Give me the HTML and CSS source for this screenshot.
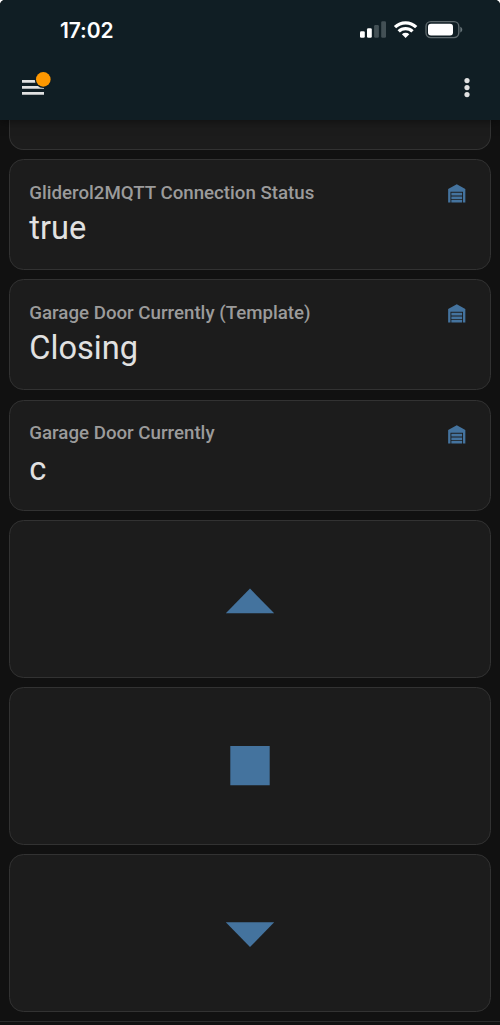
FILE: index.html
```html
<!DOCTYPE html>
<html lang="en">
<head>
<meta charset="utf-8">
<meta name="viewport" content="width=device-width, initial-scale=1">
<title>Garage Door</title>
<link rel="stylesheet" href="styles.css">
</head>
<body>
<div class="phone">
  <header class="header">
    <div class="status-bar">
      <span class="clock">17:02</span>
      <svg class="status-icons" width="104" height="20" viewBox="0 0 104 20">
        <g fill="#fff">
          <rect x="0" y="11.2" width="4.8" height="6.6" rx="1.3"/>
          <rect x="7" y="8.3" width="4.8" height="9.5" rx="1.3"/>
          <g fill="#435055">
            <rect x="14.1" y="5" width="4.8" height="12.8" rx="1.3"/>
            <rect x="21.2" y="1.2" width="4.8" height="16.6" rx="1.3"/>
          </g>
        </g>
        <g fill="none" stroke="#fff" stroke-width="3.3">
          <path d="M35 7.1a15.3 15.3 0 0 1 21.2 0"/>
          <path d="M38.7 11.4a10 10 0 0 1 13.8 0"/>
        </g>
        <path d="M45.6 17.9l-3.7-3.7a5.4 5.4 0 0 1 7.4 0z" fill="#fff"/>
        <rect x="66" y="1.6" width="32.8" height="16" rx="4.8" fill="none" stroke="#5d686c" stroke-width="1.4"/>
        <rect x="68" y="3.7" width="25" height="11.8" rx="3" fill="#fff"/>
        <path d="M100.3 6.8c2.6.9 2.6 4.7 0 5.6z" fill="#68757a"/>
      </svg>
    </div>
    <div class="toolbar">
      <svg class="menu" width="32" height="28" viewBox="0 0 32 28">
        <path d="M1 10.4h22M1 16.4h22M1 22.4h22" stroke="#e1e1e1" stroke-width="2.6"/>
        <circle cx="22.3" cy="8.4" r="8.6" fill="#101e24"/>
        <circle cx="22.3" cy="8.4" r="7.3" fill="#ff9800"/>
      </svg>
      <svg class="more" width="8" height="22" viewBox="0 0 8 22" fill="#e1e1e1">
        <circle cx="4" cy="3.6" r="2.6"/>
        <circle cx="4" cy="10.6" r="2.6"/>
        <circle cx="4" cy="17.6" r="2.6"/>
      </svg>
    </div>
  </header>
  <svg class="defs" width="0" height="0">
    <symbol id="garage" viewBox="0 0 24 24">
      <path d="M19 20H17.1V11.2H6.9V20H5V9L12 5L19 9V20M7.6 12H16.4V14.3H7.6V12M7.6 15H16.4V17.2H7.6V15M16.4 17.9V20H7.6V17.9H16.4Z"/>
    </symbol>
  </svg>
  <main class="cards">
    <section class="card card-clipped"></section>
    <section class="card entity">
      <div class="entity-text">
        <div class="name">Gliderol2MQTT Connection Status</div>
        <div class="value">true</div>
      </div>
      <svg class="entity-icon"><use href="#garage"/></svg>
    </section>
    <section class="card entity">
      <div class="entity-text">
        <div class="name">Garage Door Currently (Template)</div>
        <div class="value">Closing</div>
      </div>
      <svg class="entity-icon"><use href="#garage"/></svg>
    </section>
    <section class="card entity">
      <div class="entity-text">
        <div class="name">Garage Door Currently</div>
        <div class="value">c</div>
      </div>
      <svg class="entity-icon"><use href="#garage"/></svg>
    </section>
    <section class="card control">
      <svg width="50" height="40" viewBox="0 0 50 40"><path d="M.8 34.3L25 9.6L49.2 34.3z"/></svg>
    </section>
    <section class="card control">
      <svg width="50" height="40" viewBox="0 0 50 40"><path d="M5.3 0h39.4v39.2H5.3z"/></svg>
    </section>
    <section class="card control">
      <svg width="50" height="40" viewBox="0 0 50 40"><path d="M.8 9.3h48.4L25 34z"/></svg>
    </section>
  </main>
  <footer class="bottom"></footer>
</div>
</body>
</html>
```
FILE: styles.css
```css
* { box-sizing: border-box; }

body {
  margin: 0;
  background: #fff;
  font-family: Roboto, "Liberation Sans", sans-serif;
}

.phone {
  display: flex;
  flex-direction: column;
  width: 500px;
  height: 1025px;
  overflow: hidden;
  border-radius: 5px 5px 0 0;
  background: #111;
}

.header {
  position: relative;
  z-index: 1;
  flex: none;
  height: 120px;
  background: #101e24;
  box-shadow: 0 1px 10px rgba(0, 0, 0, .5);
}

.status-bar {
  display: flex;
  justify-content: space-between;
  align-items: center;
  height: 60px;
  padding: 0 36px 0 60px;
}

.clock {
  padding-top: 1px;
  color: #fff;
  font: 600 21px/24px Inter, sans-serif;
  letter-spacing: -.1px;
}

.toolbar {
  display: flex;
  justify-content: space-between;
  align-items: flex-start;
  height: 60px;
  padding: 11px 29px 0 21px;
}

.more { margin-top: 6px; }

.defs { display: none; }

.cards {
  flex: none;
  display: flex;
  flex-direction: column;
  gap: 9.3px;
  height: 901px;
  padding: 0 9.3px;
}

.card {
  flex: none;
  border: 1.3px solid #323232;
  border-radius: 14.5px;
  background: #1c1c1c;
}

.card-clipped {
  height: 29.8px;
  border-top: 0;
  border-top-left-radius: 0;
  border-top-right-radius: 0;
}

.entity {
  display: flex;
  justify-content: space-between;
  height: 111px;
  padding: 18px 18.2px 0 19px;
}

.name {
  margin-top: 2.8px;
  color: #9b9b9b;
  font-size: 18.7px;
  font-weight: 500;
  line-height: 24px;
}

.value {
  margin-top: 3.2px;
  color: #e1e1e1;
  font-size: 32.6px;
  line-height: 40px;
}

.entity-icon {
  flex: none;
  width: 29.5px;
  height: 29.5px;
  fill: #44739e;
}

.control {
  display: flex;
  justify-content: center;
  align-items: center;
  height: 157.7px;
  fill: #44739e;
}

.bottom {
  flex: none;
  height: 4px;
  border-top: 1px solid #2c2c2c;
}
```
